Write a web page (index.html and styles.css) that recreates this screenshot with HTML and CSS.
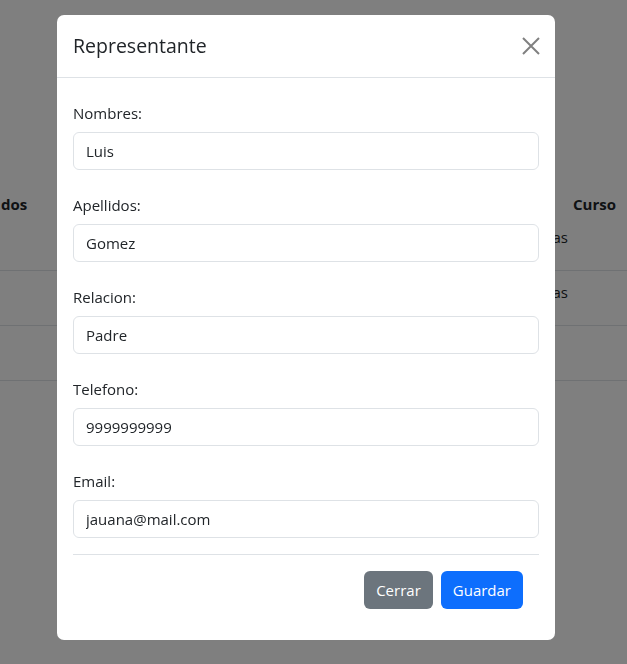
FILE: index.html
```html
<!DOCTYPE html>
<html lang="es">
<head>
<meta charset="utf-8">
<title>Representante</title>
<link rel="stylesheet" href="styles.css">
</head>
<body>
<div class="page">
  <div class="table">
    <div class="row head">
      <div class="cell c1">dos</div>
      <div class="cell c2"></div>
      <div class="cell c3">Curso</div>
    </div>
    <div class="row line">
      <div class="cell c1"></div>
      <div class="cell c2">Matemáticas</div>
      <div class="cell c3"></div>
    </div>
    <div class="row line">
      <div class="cell c1"></div>
      <div class="cell c2">Matemáticas</div>
      <div class="cell c3"></div>
    </div>
    <div class="row line">
      <div class="cell c1"></div>
      <div class="cell c2"></div>
      <div class="cell c3"></div>
    </div>
  </div>
</div>
<div class="backdrop"></div>
<div class="modal">
  <div class="dialog">
    <div class="header">
      <h5 class="title">Representante</h5>
      <button class="close" type="button" aria-label="Close">
        <svg width="18" height="18" viewBox="0 0 18 18"><path d="M1 1L17 17M17 1L1 17" stroke="#808080" stroke-width="2" fill="none"/></svg>
      </button>
    </div>
    <div class="body">
      <div class="group">
        <label class="label">Nombres:</label>
        <input class="input" type="text" value="Luis">
      </div>
      <div class="group">
        <label class="label">Apellidos:</label>
        <input class="input" type="text" value="Gomez">
      </div>
      <div class="group">
        <label class="label">Relacion:</label>
        <input class="input" type="text" value="Padre">
      </div>
      <div class="group">
        <label class="label">Telefono:</label>
        <input class="input" type="text" value="9999999999">
      </div>
      <div class="group">
        <label class="label">Email:</label>
        <input class="input" type="text" value="jauana@mail.com">
      </div>
      <hr class="sep">
      <div class="footer">
        <button class="btn btn-gray" type="button">Cerrar</button>
        <button class="btn btn-blue" type="button">Guardar</button>
      </div>
    </div>
  </div>
</div>
</body>
</html>
```
FILE: styles.css
```css
* { box-sizing: border-box; }
html, body { margin: 0; padding: 0; }
body {
  width: 627px;
  height: 664px;
  overflow: hidden;
  background: #fff;
  font-family: "Open Sans", "Noto Sans", sans-serif;
  font-size: 15px;
  line-height: 24px;
  color: #212529;
}
.page { padding-top: 184px; }
.table { width: 627px; }
.row { display: flex; }
.row.head { height: 32px; padding-top: 8px; font-weight: 700; }
.row.line { height: 55px; border-bottom: 1px solid #dee2e6; padding-top: 9px; }
.cell { white-space: nowrap; }
.c1 { width: 300px; padding-left: 1px; }
.c2 { width: 268px; text-align: right; }
.c3 { padding-left: 5px; }
.backdrop {
  position: fixed;
  inset: 0;
  background: rgba(0, 0, 0, 0.5);
}
.modal {
  position: fixed;
  inset: 0;
  padding-top: 15px;
}
.dialog {
  margin-left: 57px;
  width: 498px;
  background: #fff;
  border-radius: 7px;
  overflow: hidden;
}
.header {
  display: flex;
  align-items: center;
  justify-content: space-between;
  padding: 16px 15px 16px 16px;
  border-bottom: 1px solid #dee2e6;
}
.title {
  margin: 0;
  font-size: 19.5px;
  font-weight: 500;
  line-height: 30px;
  color: #212529;
}
.close {
  border: 0;
  background: none;
  padding: 0;
  width: 18px;
  height: 18px;
  display: flex;
}
.body { padding: 0 16px 15px; }
.group { padding-top: 23px; display: flex; flex-direction: column; }
.label { line-height: 24px; margin-bottom: 7px; }
.input {
  height: 38px;
  border: 1px solid #dee2e6;
  border-radius: 6px;
  padding: 6px 12px;
  font-family: inherit;
  font-size: 15px;
  color: #212529;
  background: #fff;
  outline: none;
}
.sep {
  margin: 16px 0 0;
  border: 0;
  border-top: 1px solid #dee2e6;
  height: 0;
}
.footer {
  display: flex;
  justify-content: flex-end;
  gap: 8px;
  padding: 16px;
}
.btn {
  height: 38px;
  border: 0;
  border-radius: 6px;
  padding: 6px 12px;
  font-family: inherit;
  font-size: 15px;
  color: #fff;
  line-height: 24px;
}
.btn-gray { background: #6c757d; }
.btn-blue { background: #0d6efd; }
```
